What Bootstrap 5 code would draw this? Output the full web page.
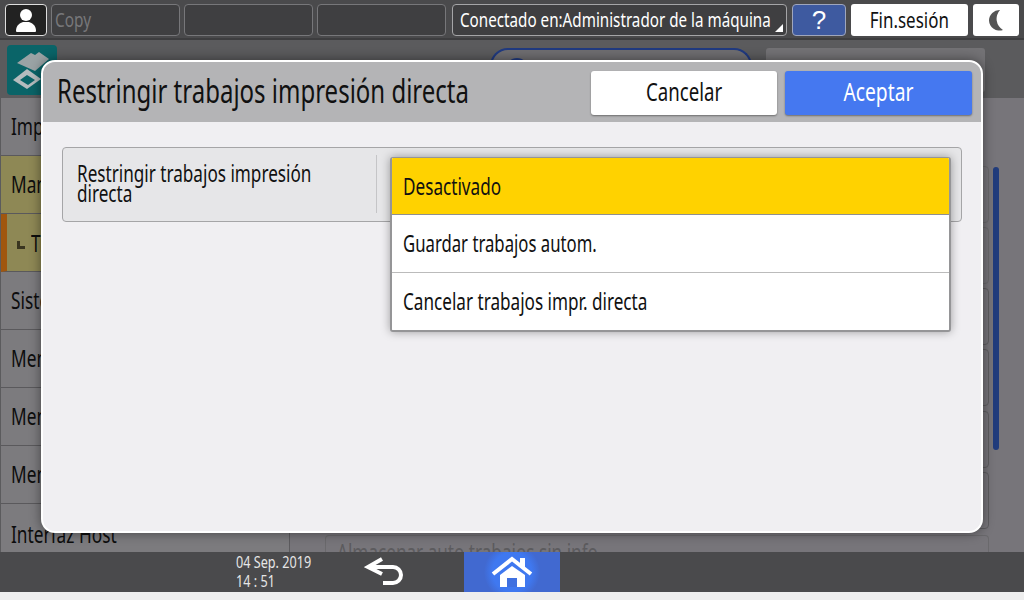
<!DOCTYPE html>
<html lang="es">
<head>
<meta charset="utf-8">
<title>Restringir trabajos impresión directa</title>
<link href="https://cdn.jsdelivr.net/npm/bootstrap@5.3.0/dist/css/bootstrap.min.css" rel="stylesheet">
<style>
html,body{height:100%;overflow:hidden}
body{width:1024px;height:600px;background:#eeeeee;font-family:"Noto Sans","Open Sans",sans-serif;color:#111;position:relative}
.sq{display:inline-block;white-space:nowrap;transform-origin:0 50%}
.sqc{transform-origin:50% 50%}
.k72{transform:scaleX(.72)}
.k73{transform:scaleX(.727)}
.k74{transform:scaleX(.745)}
.k76{transform:scaleX(.76)}
.k77{transform:scaleX(.77)}
.k79{transform:scaleX(.79)}
.screen{width:1024px;height:592px}
.topbar{height:40px;background:#4a4a4c;padding:4px 0 0 5px;gap:4px;border-bottom:2px solid #3d3d3f}
.tbtn{height:32px;border:1px solid #77777a;border-radius:4px;background:#3f3f41;color:#fff;font-size:20px;line-height:30px;white-space:nowrap;flex:none}
.tuser{width:42px;background:#222;border-color:#ddd}
.tslot{width:129px;color:#77777a;padding-left:3px}
.tconn{width:335px;padding-left:7px;position:relative;border-color:#a5a5a7;margin-left:2px}
.tconn::after{content:"";position:absolute;right:3px;bottom:3px;border-left:8px solid transparent;border-bottom:8px solid #fff}
.thelp{width:54px;background:#3e5aa0;border-color:#9fa6bd;text-align:center;font-size:26px;font-family:"Liberation Sans",sans-serif;margin-left:1px}
.twhite{background:#fff;border:0;color:#111;text-align:center;height:32px;border-radius:3px;flex:none}
.tfin{width:117px;font-size:22px;line-height:30px;margin-left:1px}
.tmoon{width:46px;margin-left:1px}
.midarea{height:512px;background:#5b5b5d}
.headstrip{height:58px;position:relative}
.headtext{position:absolute;left:62px;top:17px;font-size:24px;line-height:24px;color:#111}
.appicon{position:absolute;left:7px;top:45px}
.sidebar{width:289px;margin-left:1px;background:#7c7b7e;border-right:1px solid #5c5b5e}
.siderow{height:58px;border-bottom:1px solid #5a595c;font-size:24px;padding-left:10px;line-height:56px;color:#0d0d0d;white-space:nowrap;overflow:hidden}
.sideon{background:#8e8855}
.sidemark{border-left:6px solid #a0560f;padding-left:10px;display:flex;align-items:center;gap:6px}
.cornermark{width:8px;height:8px;border-left:3px solid #3a3520;border-bottom:3px solid #3a3520;margin-top:4px;flex:none}
.sidelast{height:48px;border-bottom:0;line-height:60px}
.contentpane{background:#77757a}
.scrolltrack{position:absolute;left:993px;top:167px;width:6px;height:283px;background:#213c7c;border-radius:3px}
.ghost{position:absolute;left:325px;width:664px;border:1px solid #5e5d60;border-radius:4px;height:57px}
.ghostfaint{border-color:#6a696c}
.ghostlast{height:17px;border-bottom:0;border-color:#6a696c;border-radius:4px 4px 0 0;padding:2px 0 0 11px;font-size:23px;line-height:28px;color:#5c5b5e;overflow:hidden;white-space:nowrap}
.pill{position:absolute;left:490px;top:48px;width:262px;height:30px;border:2px solid #203a80;border-radius:18px 18px 0 0;border-bottom:0;background:#6f6e71}
.pilldot{position:absolute;left:14px;top:8px;width:22px;height:22px;border:2px solid #203a80;border-radius:50%}
.prefbtn{position:absolute;left:766px;top:48px;width:219px;height:44px;background:#737275;border-radius:3px;font-size:22px;line-height:24px;text-align:center;padding-top:7px;color:#111}
.bottombar{height:40px;background:#4a4a4c;color:#fff}
.clock{position:absolute;left:236px;top:553px;font-size:16px;line-height:19px;color:#e6e6e6}
.backicon{position:absolute;left:364px;top:556px}
.homebtn{position:absolute;left:464px;top:552px;width:96px;height:40px;background:#4169d0}
.dialogbox{position:absolute;left:41px;top:60px;width:942px;height:473px;background:#f0eff2;border:2px solid #fff;border-radius:14px;box-shadow:0 0 12px rgba(0,0,0,.45);overflow:hidden}
.dialoghead{height:60px;background:#b4b4b6;padding:9px 9px 0 14px}
.dialogtitle{font-size:33px;line-height:40px;color:#111;font-weight:400;margin:0;min-width:0;flex:1}
.dlgbtn.btn{height:44px;font-size:25px;line-height:40px;padding:0 0 5px;border-radius:3px;border:0;box-shadow:0 1px 2px rgba(0,0,0,.4);flex:none}
.dlgcancel.btn{width:186px;background:#fff;color:#111}
.dlgok.btn{width:187px;background:#4578f0;color:#fff}
.settingrow{position:absolute;left:19px;top:85px;width:900px;height:75px;background:#e6e6e8;border:1px solid #a5a5a7;border-radius:4px}
.settinglabel{font-size:23px;line-height:20px;padding:8px 0 0 14px;width:314px;height:58px;margin-top:7px;border-right:1px solid #c5c5c7}
.optionlist{position:absolute;left:347px;top:95px;width:561px;border:2px solid #959597;border-top-width:1px;border-radius:3px;box-shadow:0 0 10px rgba(0,0,0,.35);overflow:hidden;background:#fff}
.optionlist .optionitem{height:57.4px;font-size:23px;line-height:56px;padding:0 0 0 11px;background:#fff;color:#111;border:0;border-bottom:1px solid #bbb;border-radius:0}
.optionlist .optionitem:last-child{border-bottom:0}
.optionlist .optionon{background:#ffd200;border-bottom-color:#8f8f91}
</style>
</head>
<body>
<div class="screen">
  <div class="topbar d-flex">
    <div class="tbtn tuser d-flex align-items-center justify-content-center">
      <svg width="26" height="26" viewBox="0 0 26 26"><circle cx="13" cy="8" r="6" fill="#fff"/><path d="M3 24c0-6 4-8 7-9h6c3 1 7 3 7 9 0 1-1 1-2 1H5c-1 0-2 0-2-1z" fill="#fff"/></svg>
    </div>
    <div class="tbtn tslot"><span class="sq k77">Copy</span></div>
    <div class="tbtn tslot"></div>
    <div class="tbtn tslot"></div>
    <div class="tbtn tconn"><span class="sq k76">Conectado en:Administrador de la máquina</span></div>
    <div class="tbtn thelp">?</div>
    <div class="twhite tfin"><span class="sq sqc k77">Fin.sesión</span></div>
    <div class="twhite tmoon d-flex align-items-center justify-content-center">
      <svg width="20" height="24" viewBox="0 0 20 24"><path d="M14 2A10.5 10.5 0 0 0 3 12.5 10.5 10.5 0 0 0 17 22 13 13 0 0 1 14 2z" fill="#555"/></svg>
    </div>
  </div>
  <div class="midarea d-flex flex-column">
    <div class="headstrip"><span class="headtext sq k73">Funciones de pantalla</span></div>
    <div class="d-flex flex-grow-1">
      <div class="sidebar">
        <div class="siderow"><span class="sq k72">Impresora</span></div>
        <div class="siderow sideon"><span class="sq k72">Mantenimiento</span></div>
        <div class="siderow sideon sidemark"><span class="cornermark"></span><span class="sq k72">Trabajos</span></div>
        <div class="siderow"><span class="sq k72">Sistema</span></div>
        <div class="siderow"><span class="sq k72">Menú</span></div>
        <div class="siderow"><span class="sq k72">Menú</span></div>
        <div class="siderow"><span class="sq k72">Menú</span></div>
        <div class="siderow sidelast"><span class="sq k72">Interfaz Host</span></div>
      </div>
      <div class="contentpane flex-grow-1"></div>
    </div>
  </div>
  <div class="bottombar"></div>
</div>

<svg class="appicon" width="50" height="50" viewBox="0 0 50 50"><rect width="50" height="50" rx="4" fill="#0a6468"/><path d="M10 18 24 8l4 2 4-3 10 7-14 12z" fill="#9aa3a5"/><path d="M6 35 20 24l14 10-14 10z" fill="#b5bcbe"/><path d="M13 35l7-5 8 5-7 5z" fill="#0a6468"/></svg>
<div class="pill"><div class="pilldot"></div></div>
<div class="prefbtn"><span class="sq sqc k72">Cambiar contraseña</span></div>
<div class="ghost ghostfaint" style="top:166px"></div>
<div class="ghost ghostfaint" style="top:227px"></div>
<div class="ghost" style="top:288px"></div>
<div class="ghost" style="top:349px"></div>
<div class="ghost" style="top:411px"></div>
<div class="ghost" style="top:472px"></div>
<div class="ghost ghostlast" style="top:535px"><span class="sq k74">Almacenar auto trabajos sin info</span></div>
<div class="scrolltrack"></div>

<div class="clock"><span class="sq k79">04 Sep. 2019</span><br><span class="sq k79">14 : 51</span></div>
<svg class="backicon" width="40" height="30" viewBox="0 0 40 30"><path d="M18 3 4 11l14 7M4 11h25a8 8 0 0 1 0 16H19" fill="none" stroke="#fff" stroke-width="4"/></svg>
<div class="homebtn">
  <svg width="96" height="40" viewBox="0 0 96 40" class="d-block"><defs><radialGradient id="homeglow"><stop offset=".7" stop-color="#3f78f0"/><stop offset="1" stop-color="#4169d0"/></radialGradient></defs><circle cx="48" cy="20" r="28" fill="url(#homeglow)"/><path d="M56 14V6h5v12z" fill="#fff"/><path d="M29 22 48 7l19 15" fill="none" stroke="#fff" stroke-width="4"/><path d="M36 23 48 14l13 9v12H36z" fill="#fff"/><rect x="43" y="26" width="10" height="9" fill="#3f70e0"/></svg>
</div>

<div class="dialogbox">
  <div class="dialoghead d-flex justify-content-between">
    <h1 class="dialogtitle"><span class="sq k73">Restringir trabajos impresión directa</span></h1>
    <div class="d-flex gap-2">
      <button class="btn dlgbtn dlgcancel"><span class="sq sqc k74">Cancelar</span></button>
      <button class="btn dlgbtn dlgok"><span class="sq sqc k77">Aceptar</span></button>
    </div>
  </div>
  <div class="settingrow">
    <div class="settinglabel"><span class="sq k74">Restringir trabajos impresión<br>directa</span></div>
  </div>
  <div class="optionlist list-group">
    <div class="list-group-item optionitem optionon"><span class="sq k74">Desactivado</span></div>
    <div class="list-group-item optionitem"><span class="sq k73">Guardar trabajos autom.</span></div>
    <div class="list-group-item optionitem"><span class="sq k74">Cancelar trabajos impr. directa</span></div>
  </div>
</div>
<script src="https://cdn.jsdelivr.net/npm/bootstrap@5.3.0/dist/js/bootstrap.bundle.min.js"></script>
</body>
</html>
